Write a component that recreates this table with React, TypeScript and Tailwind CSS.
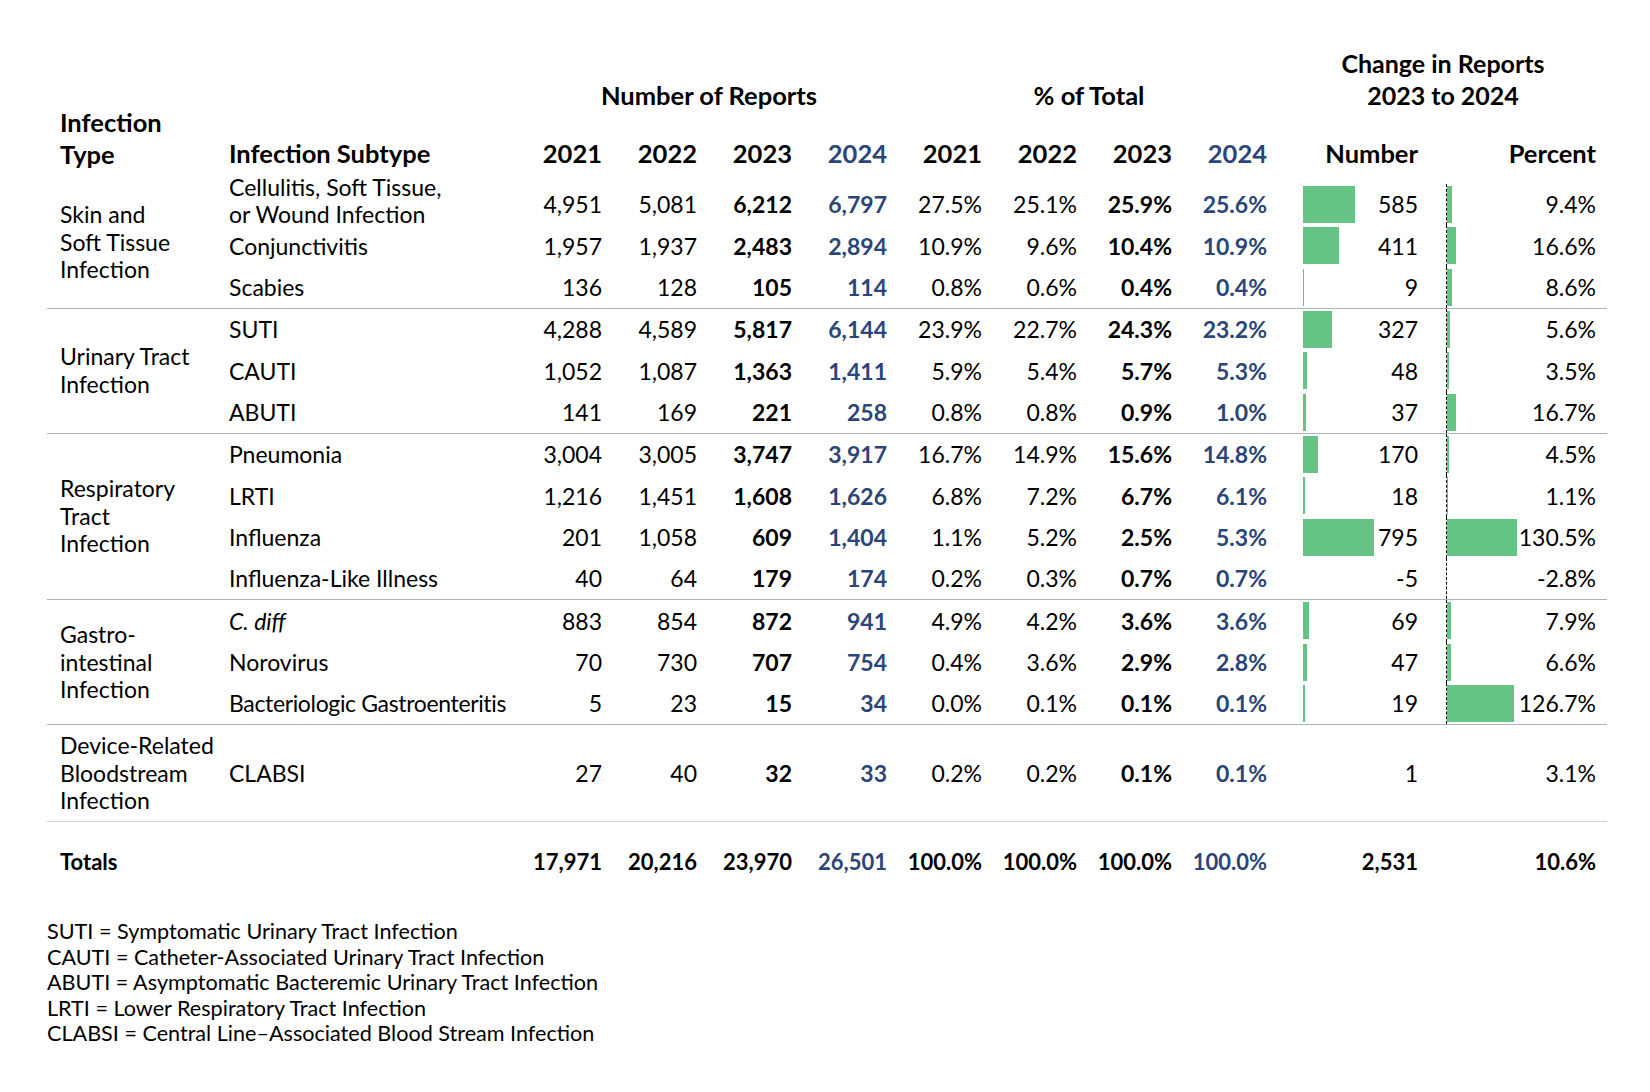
import React from "react"

type Row = {
  name: React.ReactNode
  reports: string[]
  pct: string[]
  change: number
  changePct: number
}

type Group = {
  type: string[]
  rows: Row[]
  bars?: boolean
  lift?: boolean
}

const groups: Group[] = [
  {
    type: ["Skin and", "Soft Tissue", "Infection"],
    bars: true,
    lift: true,
    rows: [
      {
        name: (
          <span className="block pb-[8px] leading-[27px]">
            Cellulitis, Soft Tissue,
            <br />
            or Wound Infection
          </span>
        ),
        reports: ["4,951", "5,081", "6,212", "6,797"],
        pct: ["27.5%", "25.1%", "25.9%", "25.6%"],
        change: 585,
        changePct: 9.4,
      },
      {
        name: "Conjunctivitis",
        reports: ["1,957", "1,937", "2,483", "2,894"],
        pct: ["10.9%", "9.6%", "10.4%", "10.9%"],
        change: 411,
        changePct: 16.6,
      },
      {
        name: "Scabies",
        reports: ["136", "128", "105", "114"],
        pct: ["0.8%", "0.6%", "0.4%", "0.4%"],
        change: 9,
        changePct: 8.6,
      },
    ],
  },
  {
    type: ["Urinary Tract", "Infection"],
    bars: true,
    rows: [
      {
        name: "SUTI",
        reports: ["4,288", "4,589", "5,817", "6,144"],
        pct: ["23.9%", "22.7%", "24.3%", "23.2%"],
        change: 327,
        changePct: 5.6,
      },
      {
        name: "CAUTI",
        reports: ["1,052", "1,087", "1,363", "1,411"],
        pct: ["5.9%", "5.4%", "5.7%", "5.3%"],
        change: 48,
        changePct: 3.5,
      },
      {
        name: "ABUTI",
        reports: ["141", "169", "221", "258"],
        pct: ["0.8%", "0.8%", "0.9%", "1.0%"],
        change: 37,
        changePct: 16.7,
      },
    ],
  },
  {
    type: ["Respiratory", "Tract", "Infection"],
    bars: true,
    rows: [
      {
        name: "Pneumonia",
        reports: ["3,004", "3,005", "3,747", "3,917"],
        pct: ["16.7%", "14.9%", "15.6%", "14.8%"],
        change: 170,
        changePct: 4.5,
      },
      {
        name: "LRTI",
        reports: ["1,216", "1,451", "1,608", "1,626"],
        pct: ["6.8%", "7.2%", "6.7%", "6.1%"],
        change: 18,
        changePct: 1.1,
      },
      {
        name: "Influenza",
        reports: ["201", "1,058", "609", "1,404"],
        pct: ["1.1%", "5.2%", "2.5%", "5.3%"],
        change: 795,
        changePct: 130.5,
      },
      {
        name: "Influenza-Like Illness",
        reports: ["40", "64", "179", "174"],
        pct: ["0.2%", "0.3%", "0.7%", "0.7%"],
        change: -5,
        changePct: -2.8,
      },
    ],
  },
  {
    type: ["Gastro-", "intestinal", "Infection"],
    bars: true,
    rows: [
      {
        name: <i>C. diff</i>,
        reports: ["883", "854", "872", "941"],
        pct: ["4.9%", "4.2%", "3.6%", "3.6%"],
        change: 69,
        changePct: 7.9,
      },
      {
        name: "Norovirus",
        reports: ["70", "730", "707", "754"],
        pct: ["0.4%", "3.6%", "2.9%", "2.8%"],
        change: 47,
        changePct: 6.6,
      },
      {
        name: <span className="whitespace-nowrap tracking-[-0.35px]">Bacteriologic Gastroenteritis</span>,
        reports: ["5", "23", "15", "34"],
        pct: ["0.0%", "0.1%", "0.1%", "0.1%"],
        change: 19,
        changePct: 126.7,
      },
    ],
  },
]

const footnotes = [
  "SUTI = Symptomatic Urinary Tract Infection",
  "CAUTI = Catheter-Associated Urinary Tract Infection",
  "ABUTI = Asymptomatic Bacteremic Urinary Tract Infection",
  "LRTI = Lower Respiratory Tract Infection",
  "CLABSI = Central Line\u2013Associated Blood Stream Infection",
]

const years = [
  { y: "2021", col: "col-start-3" },
  { y: "2022", col: "col-start-4" },
  { y: "2023", col: "col-start-5" },
  { y: "2024", col: "col-start-6 text-[#2b4579]" },
  { y: "2021", col: "col-start-7" },
  { y: "2022", col: "col-start-8" },
  { y: "2023", col: "col-start-9" },
  { y: "2024", col: "col-start-10 text-[#2b4579]" },
]

const rowCols = "grid grid-cols-[278px_repeat(8,95px)_179px_161px]"

// px per unit, taken from the Influenza bars (795 -> ~70px, 130.5% -> ~70px)
const numScale = 70.5 / 795
const pctScale = 69.5 / 130.5

function Values({ reports, pct, bold }: { reports: string[]; pct: string[]; bold?: boolean }) {
  const cell = (v: string, i: number) => (
    <div
      key={i}
      className={`text-right ${bold || i >= 2 ? "font-bold" : ""} ${i === 3 ? "text-[#2b4579]" : ""}`}
    >
      {v}
    </div>
  )
  return (
    <>
      {reports.map(cell)}
      {pct.map(cell)}
    </>
  )
}

function DataRow({ row, bars }: { row: Row; bars?: boolean }) {
  const numW = Math.max(0, row.change) * numScale
  const pctW = Math.max(0, row.changePct) * pctScale
  return (
    <div className={`${rowCols} h-[41.33px] grid-rows-[41.33px] items-center`}>
      <div>{row.name}</div>
      <Values reports={row.reports} pct={row.pct} />
      <div className="flex h-full items-center pl-[36px] pr-[28px]">
        {bars && row.change > 0 && <div className="h-[37px] bg-[#66c386]" style={{ width: numW }} />}
        <span className="ml-auto">{row.change}</span>
      </div>
      <div
        className={`flex h-full items-center pr-[11px] ${bars ? "border-l border-dashed border-black" : "border-l border-transparent"}`}
      >
        {bars && row.changePct > 0 && <div className="h-[37px] bg-[#66c386]" style={{ width: pctW }} />}
        <span className="ml-auto">{row.changePct.toFixed(1)}%</span>
      </div>
    </div>
  )
}

function TypeCell({ lines, lift }: { lines: string[]; lift?: boolean }) {
  return (
    <div className={`flex w-[182px] shrink-0 items-center pl-[13px] leading-[27.5px] ${lift ? "pb-[7px]" : ""}`}>
      <div>
        {lines.map((l) => (
          <div key={l}>{l}</div>
        ))}
      </div>
    </div>
  )
}

export default function App() {
  return (
    <div className="min-h-[1092px] w-[1650px] bg-white pl-[47px] pt-[47px] font-['Lato','Liberation_Sans',sans-serif] text-[23px] text-black">
      {/* header */}
      <div className="grid h-[137px] w-[1560px] grid-cols-[182px_278px_repeat(8,95px)_179px_161px] grid-rows-[64px_73px] text-[25.5px] font-bold leading-[32px]">
        <div className="col-start-1 row-span-2 row-start-1 flex items-end pb-[14px] pl-[13px]">
          <div>
            Infection
            <br />
            Type
          </div>
        </div>
        <div className="col-span-4 col-start-3 row-start-1 flex items-end justify-center pl-[24px]">
          Number of Reports
        </div>
        <div className="col-span-4 col-start-7 row-start-1 flex items-end justify-center pl-[24px]">
          % of Total
        </div>
        <div className="col-span-2 col-start-11 row-start-1 flex flex-col items-center pl-[12px] text-[25px]">
          <div>Change in Reports</div>
          <div>2023 to 2024</div>
        </div>
        <div className="col-start-2 row-start-2 flex items-end pb-[15px]">Infection Subtype</div>
        {years.map((c, i) => (
          <div key={i} className={`${c.col} row-start-2 flex items-end justify-end pb-[15px]`}>
            {c.y}
          </div>
        ))}
        <div className="col-start-11 row-start-2 flex items-end justify-end pb-[15px] pr-[28px]">Number</div>
        <div className="col-start-12 row-start-2 flex items-end justify-end pb-[15px] pr-[11px]">Percent</div>
      </div>

      {/* groups */}
      <div className="w-[1560px]">
        {groups.map((g, gi) => (
          <div key={gi} className="flex border-b border-[#b3b3b3]">
            <TypeCell lines={g.type} lift={g.lift} />
            <div className="flex flex-col">
              {g.rows.map((r, ri) => (
                <DataRow key={ri} row={r} bars={g.bars} />
              ))}
            </div>
          </div>
        ))}

        <div className="flex h-[97px] border-b border-[#d0d0d0]">
          <TypeCell lines={["Device-Related", "Bloodstream", "Infection"]} />
          <div className={`${rowCols} items-center`}>
            <div>CLABSI</div>
            <Values
              reports={["27", "40", "32", "33"]}
              pct={["0.2%", "0.2%", "0.1%", "0.1%"]}
            />
            <div className="pr-[28px] text-right">1</div>
            <div className="pr-[11px] text-right">3.1%</div>
          </div>
        </div>

        <div className="flex h-[78px] items-center text-[22px] font-bold">
          <div className="w-[182px] shrink-0 pl-[13px]">Totals</div>
          <div className={`${rowCols} items-center`}>
            <div />
            <Values
              reports={["17,971", "20,216", "23,970", "26,501"]}
              pct={["100.0%", "100.0%", "100.0%", "100.0%"]}
              bold
            />
            <div className="pr-[28px] text-right">2,531</div>
            <div className="pr-[11px] text-right">10.6%</div>
          </div>
        </div>
      </div>

      {/* footnotes */}
      <div className="mt-[19px] text-[21.6px] leading-[25.5px]">
        {footnotes.map((f) => (
          <div key={f}>{f}</div>
        ))}
      </div>
    </div>
  )
}
